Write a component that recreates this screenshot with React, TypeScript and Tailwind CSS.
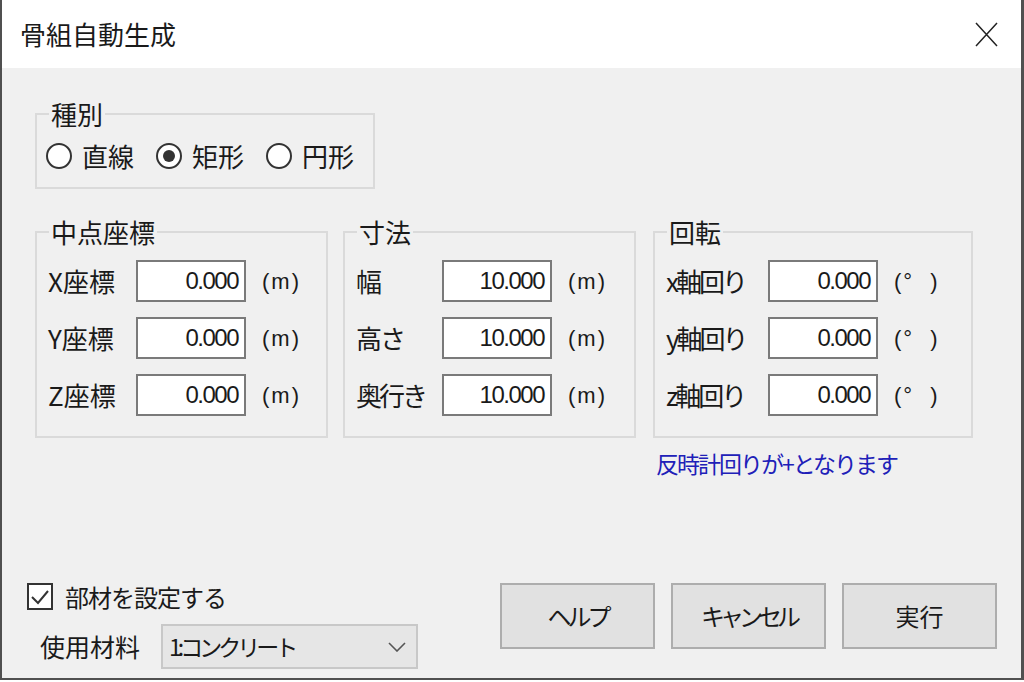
import React from 'react';

const jp = "font-['Noto_Sans_CJK_JP','Noto_Sans',sans-serif]";
const num = "font-['Liberation_Sans','Noto_Sans_CJK_JP',sans-serif]";

type Row = { label: string; value: string; track?: string };

const center: Row[] = [
    { label: 'X座標', value: '0.000' },
    { label: 'Y座標', value: '0.000' },
    { label: 'Z座標', value: '0.000' },
];

const size: Row[] = [
    { label: '幅', value: '10.000' },
    { label: '高さ', value: '10.000', track: 'tracking-[-2px]' },
    { label: '奥行き', value: '10.000', track: 'tracking-[-3px]' },
];

const rotate: Row[] = [
    { label: 'x軸回り', value: '0.000', track: 'tracking-[-3px]' },
    { label: 'y軸回り', value: '0.000', track: 'tracking-[-3px]' },
    { label: 'z軸回り', value: '0.000', track: 'tracking-[-3px]' },
];

function Radio({ label, checked }: { label: string; checked?: boolean }) {
    return (
        <div className="flex items-center gap-[10px]">
            <div className="w-[26px] h-[26px] rounded-full border-2 border-[#333] bg-white flex items-center justify-center">
                {checked && <div className="w-[12px] h-[12px] rounded-full bg-[#333]" />}
            </div>
            <span className="text-[26px] leading-none">{label}</span>
        </div>
    );
}

function Group({
    title,
    rows,
    unit,
    width,
    labelWidth,
}: {
    title: string;
    rows: Row[];
    unit: 'm' | 'deg';
    width: string;
    labelWidth: string;
}) {
    return (
        <fieldset className={`${width} border-2 border-[#dadada] pl-[11px] pr-[8px] pt-[15px] pb-[20px]`}>
            <legend className="ml-[1px] px-[2px] text-[26px] leading-none">{title}</legend>
            <div className="flex flex-col gap-[15px]">
                {rows.map((r) => (
                    <div key={r.label} className="flex items-center h-[42px]">
                        <span className={`${labelWidth} text-[26px] leading-none ${r.track ?? ''}`}>{r.label}</span>
                        <div className={`w-[110px] h-[42px] bg-white border-2 border-[#7a7a7a] flex items-center justify-end pr-[6px] ${num} text-[24px] tracking-[-1.5px]`}>
                            {r.value}
                        </div>
                        {unit === 'm' ? (
                            <span className={`ml-[16px] ${num} text-[22px] tracking-[2px]`}>(m)</span>
                        ) : (
                            <span className={`ml-[16px] ${num} text-[22px] tracking-[2px] whitespace-pre`}>{'(°  )'}</span>
                        )}
                    </div>
                ))}
            </div>
        </fieldset>
    );
}

export default function App() {
    return (
        <div className={`w-[1024px] h-[682px] bg-white ${jp} text-[#1a1a1a]`}>
            <div className="w-[1024px] h-[680px] flex flex-col border-l-2 border-r-[3px] border-b-2 border-[#505050] bg-[#f0f0f0]">
                {/* Title bar */}
                <div className="h-[68px] bg-white flex items-center justify-between pl-[18px] pr-[23px] shrink-0">
                    <span className="text-[26px] leading-none">骨組自動生成</span>
                    <svg width="23" height="25" viewBox="0 0 23 25" fill="none" stroke="#222" strokeWidth="1.5">
                        <path d="M1 1 L22 24 M22 1 L1 24" />
                    </svg>
                </div>

                {/* Body */}
                <div className="flex-1 flex flex-col pt-[33px]">
                    <div className="pl-[33px]">
                        <fieldset className="w-[340px] border-2 border-[#dadada] pl-[9px] pt-[16px] pb-[18px]">
                            <legend className="ml-[3px] px-[2px] text-[26px] leading-none">種別</legend>
                            <div className="flex items-center gap-[22px]">
                                <Radio label="直線" />
                                <Radio label="矩形" checked />
                                <Radio label="円形" />
                            </div>
                        </fieldset>
                    </div>

                    <div className="flex items-start pl-[33px] mt-[30px] gap-[15px]">
                        <Group title="中点座標" rows={center} unit="m" width="w-[293px]" labelWidth="w-[88px]" />
                        <Group title="寸法" rows={size} unit="m" width="w-[293px]" labelWidth="w-[86px]" />
                        <div className="flex flex-col ml-[2px]">
                            <Group title="回転" rows={rotate} unit="deg" width="w-[320px]" labelWidth="w-[102px]" />
                            <span className="mt-[14px] ml-[3px] text-[23px] leading-none tracking-[-2px] text-[#2020b8]">
                                反時計回りが+となります
                            </span>
                        </div>
                    </div>

                    {/* Footer */}
                    <div className="mt-auto flex justify-between items-start pl-[25px] pr-[24px] pb-[8px]">
                        <div className="flex flex-col gap-[14px]">
                            <div className="flex items-center gap-[12px]">
                                <div className="w-[26px] h-[27px] bg-white border-2 border-[#333] flex items-center justify-center">
                                    <svg width="20" height="18" viewBox="0 0 20 18" fill="none" stroke="#333" strokeWidth="2">
                                        <path d="M2 9 L8 15 L18 3" />
                                    </svg>
                                </div>
                                <span className="text-[24px] leading-none tracking-[-1px]">部材を設定する</span>
                            </div>
                            <div className="flex items-center pl-[13px]">
                                <span className="w-[121px] text-[25px] leading-none">使用材料</span>
                                <div className="w-[257px] h-[45px] bg-[#e6e6e6] border-2 border-[#c8c8c8] flex items-center justify-between pl-[6px] pr-[10px]">
                                    <span className="text-[23px] leading-none tracking-[-4px]">1:コンクリート</span>
                                    <svg width="18" height="10" viewBox="0 0 18 10" fill="none" stroke="#555" strokeWidth="1.6">
                                        <path d="M1 1 L9 9 L17 1" />
                                    </svg>
                                </div>
                            </div>
                        </div>

                        <div className="flex gap-[16px] mb-[21px]">
                            {[
                                { t: 'ヘルプ', track: 'tracking-[-4px]' },
                                { t: 'キャンセル', track: 'tracking-[-5px]' },
                                { t: '実行', track: '' },
                            ].map((b) => (
                                <button
                                    key={b.t}
                                    className={`w-[155px] h-[66px] bg-[#e1e1e1] border-2 border-[#adadad] flex items-center justify-center text-[24px] leading-none ${b.track}`}
                                >
                                    {b.t}
                                </button>
                            ))}
                        </div>
                    </div>
                </div>
            </div>
        </div>
    );
}
